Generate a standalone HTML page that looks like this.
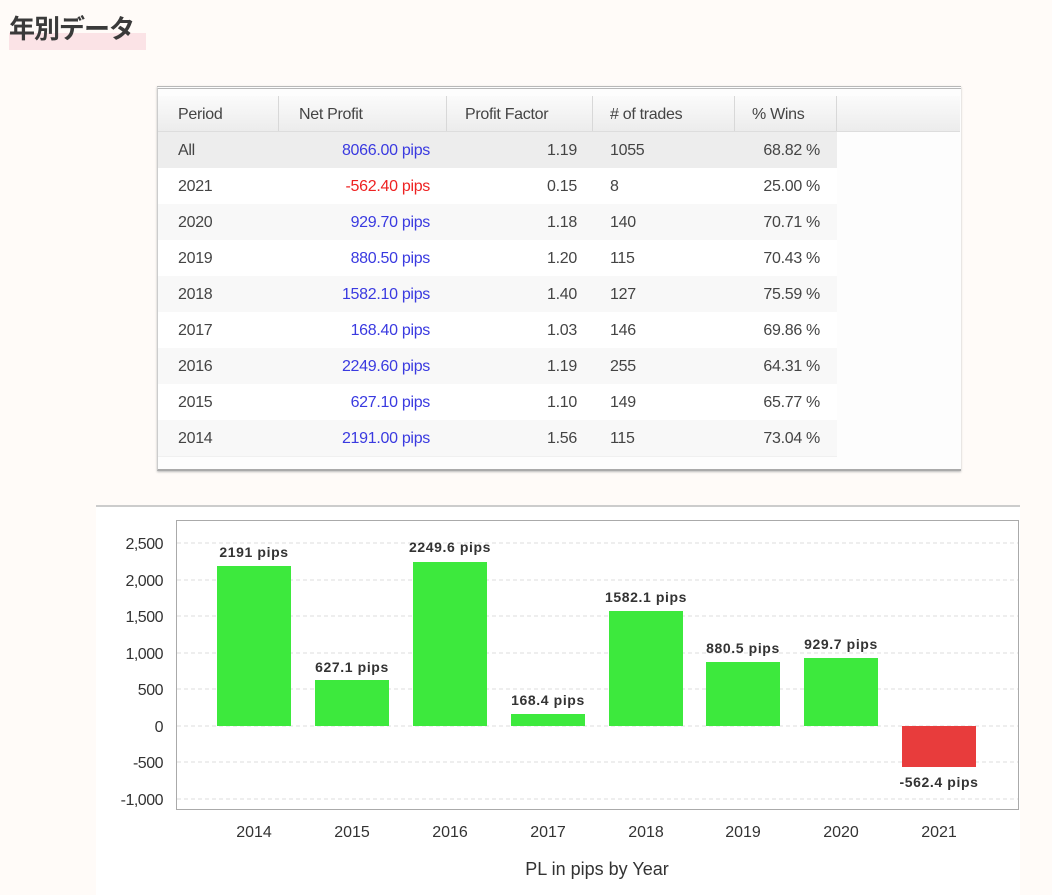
<!DOCTYPE html>
<html><head><meta charset="utf-8"><style>
body{margin:0;width:1052px;height:895px;background:#fffbf8;position:relative;overflow:hidden;font-family:"Liberation Sans",Arial,sans-serif}
.title{position:absolute;left:9px;top:9px;font:bold 26px "Liberation Sans","Noto Sans CJK JP",sans-serif;color:#3a3a3a;letter-spacing:-1px}
.hl{position:absolute;left:9px;top:33px;width:137px;height:17px;background:#fbe3e6}
.tbl{position:absolute;left:157px;top:86px;width:803px;height:380px;background:#fdfdfd;border-top:3px double #b8b8b8;border-bottom:2px solid #aaa;border-left:1px solid #ccc;box-shadow:0 1px 2px #bbb}
.row{position:absolute;left:0;height:36px;width:680px;font-size:16px;color:#444;letter-spacing:-0.3px}
.row div{position:absolute;top:0;line-height:38px}
.hdr{top:7px;width:802px;height:35px;background:linear-gradient(#fbfbfb,#ececec);border-bottom:1px solid #ddd}
.hdr div{border-right:1px solid #d8d8d8;height:35px;padding-left:20px;box-sizing:border-box;line-height:37px}
.b{color:#3a3ae0}.r{color:#ee2222}
</style></head><body>
<div class="hl"></div><div class="title">年別データ</div>
<div class="tbl">
<div class="row hdr"><div style="left:0;width:121px">Period</div><div style="left:121px;width:168px">Net Profit</div><div style="left:289px;width:146px;padding-left:18px">Profit Factor</div><div style="left:435px;width:142px;padding-left:17px">&#35; of trades</div><div style="left:577px;width:102px;padding-left:17px">% Wins</div></div>
</div>
<div id="rows"></div>
<svg style="position:absolute;left:0;top:0" width="1052" height="895">
<rect x="96" y="505" width="924" height="390" fill="#fff"/>
<line x1="96" y1="506" x2="1020" y2="506" stroke="#ccc" stroke-width="2"/>
<rect x="176.5" y="520.5" width="842" height="289" fill="#fff" stroke="#aaa"/>
<g stroke="#ddd" stroke-dasharray="4,3">
<line x1="177" x2="1018" y1="543" y2="543"/><line x1="177" x2="1018" y1="580" y2="580"/><line x1="177" x2="1018" y1="616" y2="616"/><line x1="177" x2="1018" y1="653" y2="653"/><line x1="177" x2="1018" y1="689" y2="689"/><line x1="177" x2="1018" y1="726" y2="726"/><line x1="177" x2="1018" y1="762" y2="762"/><line x1="177" x2="1018" y1="799" y2="799"/>
</g>
<g font-size="16" fill="#333" text-anchor="end" letter-spacing="-0.5">
<text x="163" y="549">2,500</text><text x="163" y="586">2,000</text><text x="163" y="622">1,500</text><text x="163" y="659">1,000</text><text x="163" y="695">500</text><text x="163" y="732">0</text><text x="163" y="768">-500</text><text x="163" y="805">-1,000</text>
</g>
<g fill="#3de93d">
<rect x="217" y="566" width="74" height="160"/><rect x="315" y="680" width="74" height="46"/><rect x="413" y="562" width="74" height="164"/><rect x="511" y="714" width="74" height="12"/><rect x="609" y="611" width="74" height="115"/><rect x="706" y="662" width="74" height="64"/><rect x="804" y="658" width="74" height="68"/>
</g>
<rect x="902" y="726" width="74" height="41" fill="#e83c3c"/>
<g font-size="14" font-weight="bold" fill="#333" text-anchor="middle" letter-spacing="0.6">
<text x="254" y="557">2191 pips</text><text x="352" y="672">627.1 pips</text><text x="450" y="552">2249.6 pips</text><text x="548" y="705">168.4 pips</text><text x="646" y="602">1582.1 pips</text><text x="743" y="653">880.5 pips</text><text x="841" y="649">929.7 pips</text><text x="939" y="787">-562.4 pips</text>
</g>
<g font-size="16" fill="#333" text-anchor="middle">
<text x="254" y="837">2014</text><text x="352" y="837">2015</text><text x="450" y="837">2016</text><text x="548" y="837">2017</text><text x="646" y="837">2018</text><text x="743" y="837">2019</text><text x="841" y="837">2020</text><text x="939" y="837">2021</text>
<text x="597" y="875" font-size="18">PL in pips by Year</text>
</g>
</svg>
<script>
var d=[["All","8066.00 pips","1.19","1055","68.82 %","b"],["2021","-562.40 pips","0.15","8","25.00 %","r"],["2020","929.70 pips","1.18","140","70.71 %","b"],["2019","880.50 pips","1.20","115","70.43 %","b"],["2018","1582.10 pips","1.40","127","75.59 %","b"],["2017","168.40 pips","1.03","146","69.86 %","b"],["2016","2249.60 pips","1.19","255","64.31 %","b"],["2015","627.10 pips","1.10","149","65.77 %","b"],["2014","2191.00 pips","1.56","115","73.04 %","b"]];
var h="";d.forEach(function(r,i){var bg=i==0?"#ededed":(i%2?"#fff":"#f8f8f8");
h+='<div class="row" style="position:absolute;left:158px;top:'+(132+i*36)+'px;width:679px;background:'+bg+';border-bottom:1px solid #f0f0f0"><div style="left:20px">'+r[0]+'</div><div class="'+r[5]+'" style="right:407px">'+r[1]+'</div><div style="right:260px">'+r[2]+'</div><div style="left:452px">'+r[3]+'</div><div style="right:17px">'+r[4]+'</div></div>';});
document.getElementById("rows").innerHTML=h;
</script>
</body></html>
